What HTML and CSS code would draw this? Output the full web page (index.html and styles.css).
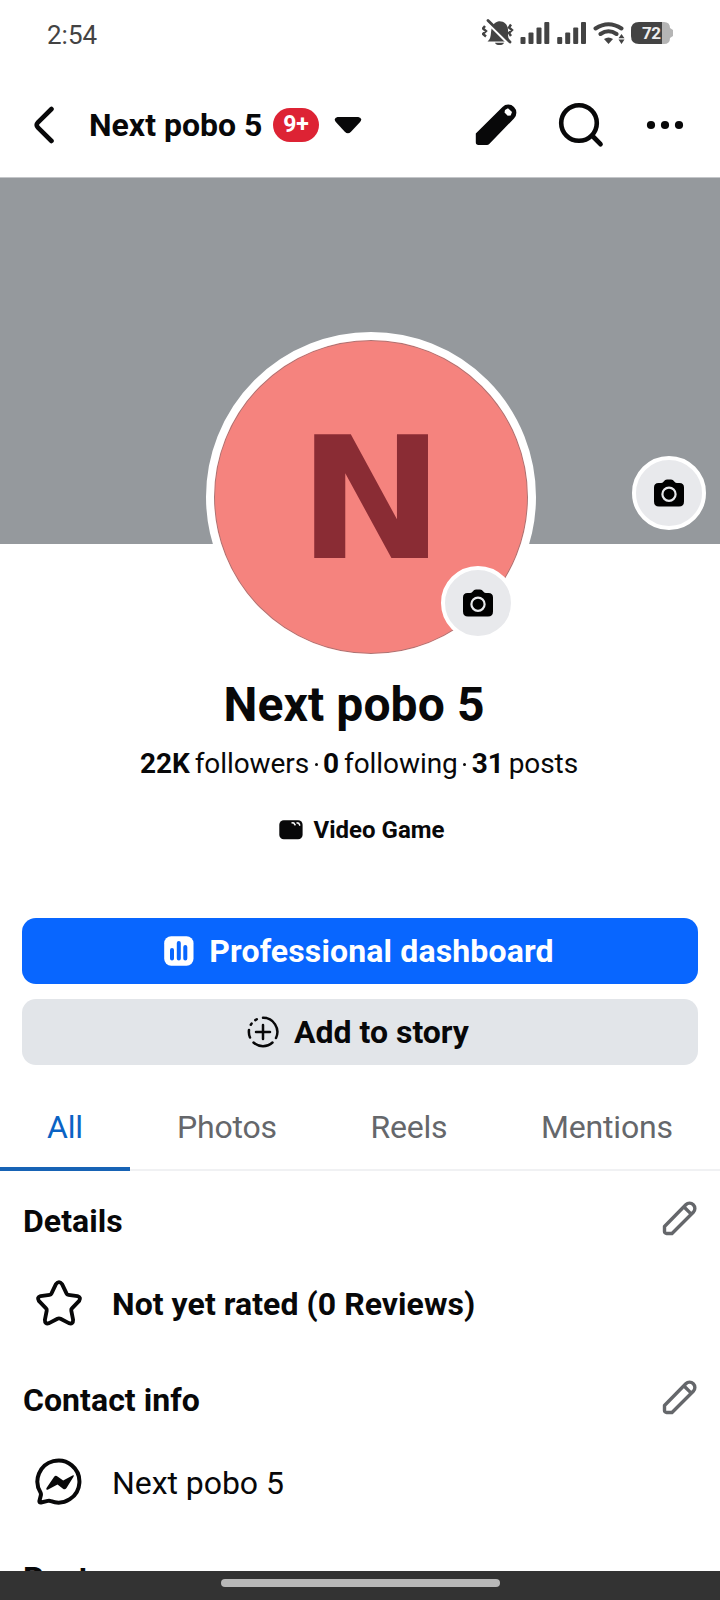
FILE: index.html
```html
<!DOCTYPE html>
<html lang="en">
<head>
<meta charset="utf-8">
<title>Next pobo 5</title>
<link rel="stylesheet" href="styles.css">
</head>
<body>
<svg class="defs" width="0" height="0" aria-hidden="true">
  <symbol id="camera" viewBox="0 0 32 28">
    <path d="M5.500 4H8q1.500 0 2.500-1.300Q12 .5 14 .5h4q2 0 3.500 2.200Q22.500 4 24 4h2.500Q31 4 31 8.500v14q0 5-5 5H6q-5 0-5-5v-14Q1 4 5.500 4z"/>
    <circle cx="16" cy="15.200" r="6.600" fill="none" stroke="#e8e9ec" stroke-width="2.200"/>
  </symbol>
  <symbol id="pencil" viewBox="0 0 36 36">
    <path d="M2.500 26.500 23.800 4.700a5.200 5.200 0 0 1 7.500 7.500L10 33.500H4.500a2 2 0 0 1-2-2zM22.300 7.200l6.700 6.700" fill="none" stroke="#65676b" stroke-width="3.400" stroke-linejoin="round"/>
  </symbol>
</svg>
<div class="screen">
  <div class="status">
    <span class="clock">2:54</span>
    <svg class="indicators" width="194" height="30" viewBox="0 0 194 30" fill="#434343">
      <path d="M5.500 23.500c4-3 3-8 4-12.500C11 5.500 14 3.700 17 3.200c5-.2 8.500 3 9 8 .3 5-1 9 3 12.300z"/>
      <path d="M13 24.700h9a4.600 3 0 0 1-9 0z"/>
      <path d="M3.500 2.500 26 25" stroke="#fff" stroke-width="3"/>
      <path d="M6 2.500 28 24" stroke="#434343" stroke-width="2.800" stroke-linecap="round"/>
      <path d="m3 8-2 2.500 3 2.500-3 3 3 2.500M29 6.500 27 9.500l3 2.500-3 3 2 3" fill="none" stroke="#434343" stroke-width="2.400"/>
      <g id="bars">
        <rect x="38.500" y="19" width="5" height="7" rx="1"/><rect x="46.500" y="14.500" width="5" height="11.500" rx="1"/><rect x="54.500" y="9.500" width="5" height="16.500" rx="1"/><rect x="62.300" y="4" width="5" height="22" rx="1"/>
      </g>
      <use href="#bars" x="36.700"/>
      <path d="M113.500 10.500q13-8.500 26 0M118.500 16q8-5.500 16 0" fill="none" stroke="#434343" stroke-width="4" stroke-linecap="round"/>
      <path d="M122 21q4.500-3 9 0l-4.500 5z"/>
      <path d="m139.500 16 3 4.200h-6zM136.500 21.500h6l-3 4.500z" stroke="#fff" stroke-width="1.500" paint-order="stroke"/>
      <path d="M179 4h3q6 0 6 6l3 2v6l-3 2q0 6-6 6h-3z" fill="#b5b5b5"/>
      <path d="M180 4v22h-23q-8 0-8-8v-6q0-8 8-8z"/>
      <text class="battery-text" x="160" y="21" textLength="19">72</text>
    </svg>
  </div>
  <header class="header">
    <svg class="back" width="22" height="38" viewBox="0 0 22 38"><path d="M18.500 3 5 16.300q-2.500 2.700 0 5.400L18.500 35" fill="none" stroke="#080809" stroke-width="4.600" stroke-linecap="round"/></svg>
    <span class="header-title">Next pobo 5</span>
    <span class="badge">9+</span>
    <svg class="caret" width="28" height="18" viewBox="0 0 28 18"><path d="M3.500 1h20.800q4.700 1.200 1.800 5L17 15.700q-3.100 3-6.200 0L1.800 6q-2.700-4 1.700-5z" fill="#080809"/></svg>
    <svg class="edit" width="42" height="42" viewBox="0 0 42 42"><path d="M.8 29.500 27.500 3a8 8 0 0 1 11.500 11.500L14 40.200q-.8.800-2 .8H3.500Q.8 41 .8 38.300z" fill="#080809"/><path d="m30 6 3-1.700 4 3.700-1.300 3.500-3 .2-3.200-3.200z" fill="#fff"/></svg>
    <svg class="search" width="46" height="46" viewBox="0 0 46 46" fill="none" stroke="#080809" stroke-linecap="round"><circle cx="21" cy="21" r="17.800" stroke-width="4.600"/><path d="m34.500 34 8 8.200" stroke-width="4.700"/></svg>
    <svg class="more" width="38" height="10" viewBox="0 0 38 10" fill="#080809"><circle cx="5" cy="5" r="4.100"/><circle cx="19" cy="5" r="4.100"/><circle cx="33" cy="5" r="4.100"/></svg>
  </header>
  <section class="hero">
    <div class="cover"></div>
    <div class="avatar"><span class="initial">N</span></div>
    <div class="camera cover-camera"><svg width="32" height="28"><use href="#camera"/></svg></div>
    <div class="camera avatar-camera"><svg width="32" height="28"><use href="#camera"/></svg></div>
  </section>
  <section class="identity">
    <h1 class="name">Next pobo 5</h1>
    <p class="stats"><b>22K</b><span class="label">followers</span><i class="dot"></i><b>0</b><span class="label">following</span><i class="dot"></i><b>31</b><span class="label">posts</span></p>
    <p class="category">
      <svg width="24" height="20" viewBox="0 0 24 20"><rect x=".3" y=".3" width="23.300" height="19" rx="4.500" fill="#080809"/><path d="m12.500 2.800 2.300.2 1.600 2.400M17.500 2.800l2.200.4 1.300 2.400" fill="none" stroke="#fff" stroke-width="1.500"/></svg>
      <span>Video Game</span>
    </p>
  </section>
  <div class="actions">
    <div class="button primary">
      <svg width="30" height="30" viewBox="0 0 30 30"><rect x=".2" y=".2" width="29.300" height="29.500" rx="7" fill="#fff"/><path d="M8 14v8.500M14.800 7v15.500M21.300 11v11.500" stroke="#0866ff" stroke-width="4" stroke-linecap="round"/></svg>
      <span>Professional dashboard</span>
    </div>
    <div class="button secondary">
      <svg width="32" height="32" viewBox="0 0 32 32" fill="none" stroke="#080809" stroke-width="2.500" stroke-linecap="round"><path d="M16 1.800A14.200 14.200 0 0 1 29 22M25.500 26.500A14.200 14.200 0 0 1 6.500 26.500M3 21.500A14.200 14.200 0 0 1 2 14M3.800 8.800l.8-1.200M8.300 4.100l1.500-.9M16 9v14M9 16h14"/></svg>
      <span>Add to story</span>
    </div>
  </div>
  <nav class="tabs">
    <span class="tab active">All</span><span class="tab">Photos</span><span class="tab">Reels</span><span class="tab">Mentions</span>
  </nav>
  <section class="info">
    <div class="info-head"><h2>Details</h2><svg width="36" height="36"><use href="#pencil"/></svg></div>
    <div class="info-row strong">
      <svg width="48" height="48" viewBox="-1 -1 50 50"><path d="M20.800 4.300q3.200-4.200 6.400 0l4.600 9.700q.6 1.400 2 1.600l9.400 1.200q4.200 1.300 1.800 5l-7.500 7.800q-1 1-.7 2.300l1.900 9.600q.1 4.900-4.400 3.500l-8.700-4.600q-1.600-.8-3.200 0L13.700 45q-4.500 1.400-4.400-3.500l1.900-9.600q.3-1.300-.7-2.300L3 21.800q-2.400-3.700 1.800-5l9.400-1.200q1.400-.2 2-1.600z" fill="none" stroke="#080809" stroke-width="4" stroke-linejoin="round"/></svg>
      <span>Not yet rated (0 Reviews)</span>
    </div>
    <div class="info-head"><h2>Contact info</h2><svg width="36" height="36"><use href="#pencil"/></svg></div>
    <div class="info-row">
      <svg width="48" height="48" viewBox="-1 0 48 48"><path d="M4.500 34.500A21 21 0 1 1 15 43.200q-1.500-.7-3.200-.3L5 44.500q-1.800.3-1.600-1.500l1.400-5.500q.4-1.500-.3-3z" fill="none" stroke="#080809" stroke-width="4"/><path d="M10.500 30 18 19q1.500-2 3.500-.5l5.700 4.100 9.300-5.100q2.200-.6 1 1.200L30.500 30q-1.500 2-3.500.7l-5.500-4.200-9.800 5.200q-2.200.5-1.200-1.700z" fill="#080809"/></svg>
      <span>Next pobo 5</span>
    </div>
    <div class="info-head posts"><h2>Posts</h2></div>
  </section>
  <div class="navbar"><div class="handle"></div></div>
</div>
</body>
</html>
```

FILE: styles.css
```css
* { box-sizing: border-box; }
body { margin: 0; background: #fff; font-family: Roboto, "Liberation Sans", sans-serif; color: #080809; }
h1, h2, p { margin: 0; }
svg { display: block; flex: none; }
span { white-space: nowrap; }
.defs { position: absolute; }
.screen { width: 720px; height: 1600px; overflow: hidden; display: flex; flex-direction: column; }

.status { height: 68px; flex: none; padding: 18px 44px 0 47px; display: flex; justify-content: space-between; }
.clock { font-size: 26px; line-height: 34px; color: #434343; }
.battery-text { font-size: 17px; font-weight: 700; fill: #eee; }

.header { height: 110px; flex: none; border-bottom: 1px solid #c4c6c9; display: flex; align-items: center; padding: 4px 34px 0 33px; }
.header-title { margin-left: 34px; padding-top: 1px; font-size: 32px; font-weight: 700; width: 174px; }
.badge { margin-left: 10px; width: 46px; height: 34px; border-radius: 17px; background: #dd2334; color: #fff; font-size: 23px; font-weight: 700; line-height: 34px; text-align: center; }
.caret { margin-left: 15px; }
.edit { margin-left: 113px; }
.search { margin-left: 41px; }
.more { margin-left: 42px; }

.hero { height: 484px; flex: none; position: relative; }
.cover { height: 366px; background: #95999d; }
.avatar { position: absolute; left: 206px; top: 154px; width: 330px; height: 330px; border: 8px solid #fff; border-radius: 50%; background: #f5837e; color: #8a2c34; font-family: "DejaVu Sans", sans-serif; font-size: 169px; font-weight: 700; line-height: 319px; text-align: center; box-shadow: inset 0 0 0 1px #a87575; }
.initial { display: block; transform: scaleX(1.03); }
.camera { position: absolute; width: 74px; height: 74px; border: 4px solid #fff; border-radius: 50%; background: #e8e9ec; display: flex; align-items: center; justify-content: center; }
.cover-camera { left: 632px; top: 278px; }
.avatar-camera { left: 441px; top: 388px; }

.identity { height: 256px; flex: none; display: flex; flex-direction: column; align-items: center; }
.name { margin-top: 15px; margin-right: 12px; height: 56px; line-height: 56px; font-size: 48px; font-weight: 700; white-space: nowrap; letter-spacing: .1px; }
.stats { margin-top: 13px; margin-right: 2px; height: 36px; line-height: 36px; font-size: 28px; letter-spacing: -.08px; display: flex; align-items: center; }
.label { margin-left: 5px; }
.dot { width: 3px; height: 3px; border-radius: 50%; background: #080809; margin: 0 5.5px; }
.category { margin-top: 32px; margin-left: 3px; height: 32px; display: flex; align-items: center; gap: 11px; font-size: 24px; font-weight: 700; line-height: 32px; }

.actions { padding: 0 22px; display: flex; flex-direction: column; gap: 15px; flex: none; }
.button { height: 66px; border-radius: 14px; display: flex; align-items: center; justify-content: center; font-size: 32px; font-weight: 700; }
.primary { background: #0866ff; color: #fff; gap: 15px; padding-right: 2px; letter-spacing: .14px; }
.secondary { background: #e2e5e9; gap: 15px; padding-right: 4px; padding-bottom: 1px; }

.tabs { height: 106px; flex: none; border-bottom: 2px solid #f0f1f3; display: flex; font-size: 32px; line-height: 38px; color: #65676b; letter-spacing: -.18px; }
.tab { height: 106px; padding: 43px 46.500px 0 47px; }
.active { width: 130px; color: #0a63c4; border-bottom: 4px solid #1763b5; }

.info { flex: 1; min-height: 0; overflow: hidden; padding: 0 22px 0 23px; }
.info-head { display: flex; justify-content: space-between; height: 80px; padding-top: 29px; }
.info-head h2 { font-size: 32px; line-height: 43px; font-weight: 700; letter-spacing: .05px; }
.info-row { display: flex; align-items: flex-start; gap: 29px; height: 99px; padding: 28px 0 0 12px; font-size: 32px; line-height: 50px; letter-spacing: -.05px; }
.strong { font-weight: 700; letter-spacing: .05px; }
.posts { padding-top: 28px; }

.navbar { height: 29px; flex: none; background: #333; display: flex; justify-content: center; padding-top: 8px; }
.handle { width: 279px; height: 8px; border-radius: 4px; background: #b8b8b8; }
```
